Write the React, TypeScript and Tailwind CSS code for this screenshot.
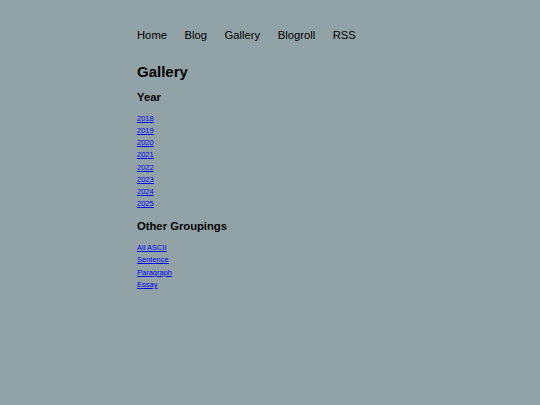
const years = ["2018", "2019", "2020", "2021", "2022", "2023", "2024", "2025"]
const groupings = ["All ASCII", "Sentence", "Paragraph", "Essay"]
const navItems = ["Home", "Blog", "Gallery", "Blogroll", "RSS"]

export default function App() {
  return (
    <div
      className="min-h-screen w-full bg-[#92a3a8] text-black"
      style={{ fontFamily: '"Liberation Sans", Arial, sans-serif' }}
    >
      <div className="mx-auto w-[266px] pt-[28.5px]">
        {/* Nav */}
        <nav className="flex gap-[17.5px] text-[11.25px] leading-[13px]">
          {navItems.map((item) => (
            <a key={item} href="#" className="text-black no-underline">
              {item}
            </a>
          ))}
        </nav>

        <h1 className="mt-[21px] text-[15px] font-bold leading-[18px]">Gallery</h1>

        <h2 className="mt-[10.5px] text-[11.25px] font-bold leading-[13px]">Year</h2>
        <ul className="mt-[9px] text-[7.5px] leading-[12.15px]">
          {years.map((y) => (
            <li key={y}>
              <a href="#" className="text-[#0000ee] underline">
                {y}
              </a>
            </li>
          ))}
        </ul>

        <h2 className="mt-[9.5px] text-[11.25px] font-bold leading-[13px]">Other Groupings</h2>
        <ul className="mt-[9.5px] text-[7.5px] leading-[12.15px]">
          {groupings.map((g) => (
            <li key={g}>
              <a href="#" className="text-[#0000ee] underline">
                {g}
              </a>
            </li>
          ))}
        </ul>
      </div>
    </div>
  )
}
